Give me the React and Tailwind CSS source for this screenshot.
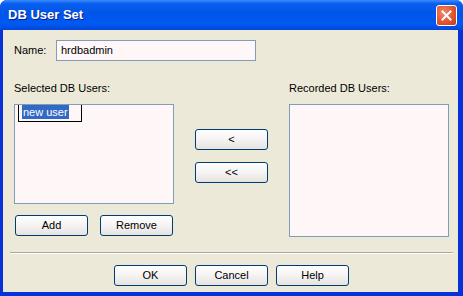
import React from "react";

function Btn({ children, className = "" }) {
  return (
    <div
      className={
        "flex h-[21px] w-[73px] items-center justify-center rounded-[3px] border border-[#003C74] bg-linear-to-b from-white via-[#F5F3F3] to-[#E6E3DE] text-[11px] leading-none text-black " +
        className
      }
    >
      {children}
    </div>
  );
}

export default function App() {
  return (
    <div
      className="relative h-[296px] w-[463px] overflow-hidden rounded-t-[7px] bg-[#0831D9]"
      style={{ fontFamily: '"Liberation Sans", Arial, sans-serif' }}
    >
      {/* Title bar */}
      <div className="flex h-[30px] items-center justify-between bg-[linear-gradient(180deg,#3A8CFF_0%,#0A5EEE_12%,#0055EA_45%,#0059F2_80%,#0046D6_100%)] pl-[8px] pr-[6px]">
        <span className="text-[13px] font-bold text-white [text-shadow:1px_1px_0_#0A1E8C]">DB User Set</span>
        <div className="flex h-[21px] w-[21px] items-center justify-center rounded-[3px] border border-white bg-[radial-gradient(circle_at_35%_35%,#F08A6A_0%,#E2552F_55%,#C43A18_100%)]">
          <svg width="11" height="11" viewBox="0 0 11 11">
            <path d="M1.5 1.5 L9.5 9.5 M9.5 1.5 L1.5 9.5" stroke="white" strokeWidth="2" strokeLinecap="square" />
          </svg>
        </div>
      </div>

      {/* Body */}
      <div className="ml-[3px] mr-[5px] flex h-[262px] flex-col bg-[#ECE9D8] pl-[11px] pr-[9px]">
        {/* Name row */}
        <div className="mt-[10px] flex h-[21px] items-center">
          <span className="w-[42px] text-[11px] text-black">Name:</span>
          <div className="flex h-[21px] w-[200px] items-center border border-[#7F9DB9] bg-[#FFF7F7] pl-[4px] text-[11px] text-black">
            hrdbadmin
          </div>
        </div>

        {/* Labels */}
        <div className="mt-[21px] flex h-[13px] items-center text-[11px] leading-none text-black">
          <span className="w-[275px]">Selected DB Users:</span>
          <span>Recorded DB Users:</span>
        </div>

        {/* Main area */}
        <div className="mt-[9px] flex">
          <div className="flex w-[160px] flex-col">
            <div className="h-[100px] w-[160px] border border-[#7F9DB9] bg-[#FFF7F7] pl-[3px]">
              <div className="flex h-[17px] w-[64px] items-start border-x border-b border-black pl-[3px]">
                <span className="h-[14px] bg-[#316AC5] px-[1px] text-[11px] leading-[14px] text-white">new user</span>
              </div>
            </div>
            <div className="mt-[11px] flex gap-[12px] pl-[1px]">
              <Btn>Add</Btn>
              <Btn>Remove</Btn>
            </div>
          </div>

          <div className="ml-[21px] flex w-[73px] flex-col pt-[25px]">
            <Btn>&lt;</Btn>
            <Btn className="mt-[12px]">&lt;&lt;</Btn>
          </div>

          <div className="ml-[21px] h-[133px] w-[160px] border border-[#7F9DB9] bg-[#FFF7F7]" />
        </div>

        {/* Separator */}
        <div className="ml-[-4px] mt-[15px] h-[2px] w-[443px] border-t border-b border-t-[#ACA899] border-b-white" />

        {/* Bottom buttons */}
        <div className="mt-[11px] flex gap-[8px] pl-[100px]">
          <Btn>OK</Btn>
          <Btn>Cancel</Btn>
          <Btn>Help</Btn>
        </div>
      </div>
    </div>
  );
}
